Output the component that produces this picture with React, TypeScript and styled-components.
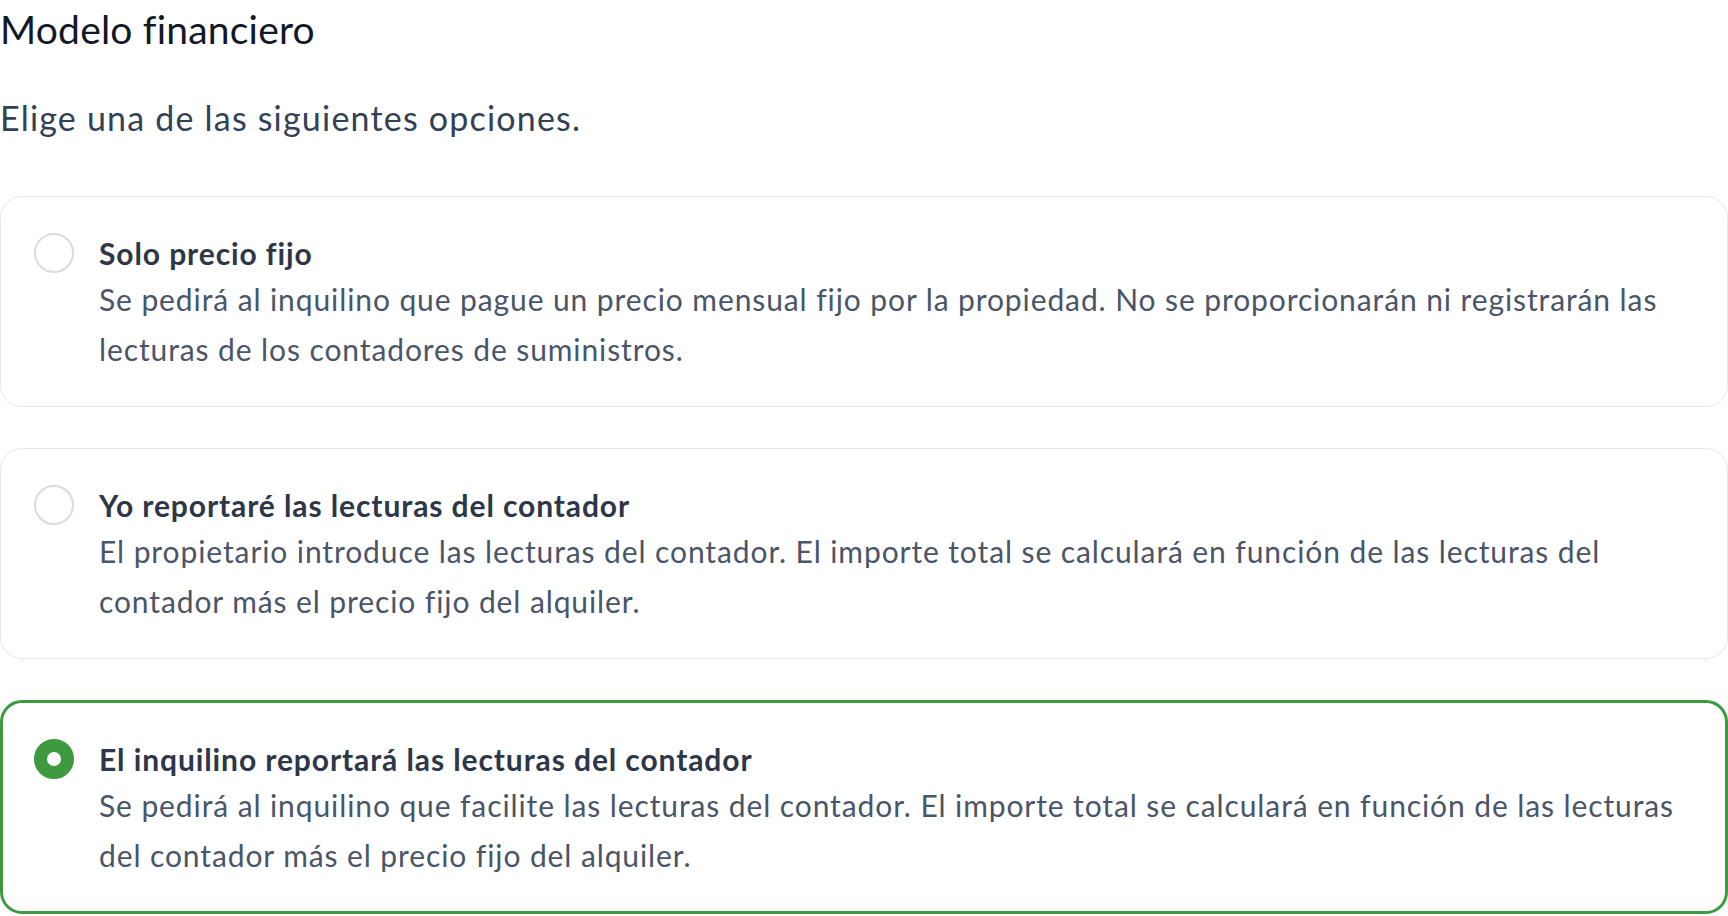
import React, { useState } from 'react'
import styled, { createGlobalStyle } from 'styled-components'

const GlobalStyle = createGlobalStyle`
  html, body {
    margin: 0;
    padding: 0;
    background: #ffffff;
  }
  body {
    font-family: Lato, "Liberation Sans", sans-serif;
    font-variant-ligatures: none;
  }
  * {
    box-sizing: border-box;
  }
`

const Page = styled.main`
  width: 1728px;
  display: flex;
  flex-direction: column;
`

const Heading = styled.h1`
  margin: 0;
  font-size: 39px;
  line-height: 58px;
  font-weight: 400;
  letter-spacing: 0.2px;
  color: #111827;
`

const Subtitle = styled.p`
  margin: 38px 0 56px;
  font-size: 34px;
  line-height: 44px;
  letter-spacing: 1.2px;
  color: #334155;
`

const OptionList = styled.div`
  display: flex;
  flex-direction: column;
  gap: 41px;
`

const Card = styled.label<{ $active: boolean }>`
  display: flex;
  align-items: flex-start;
  gap: 25px;
  padding: ${p => (p.$active ? '35px 31px 31px' : '35px 33px 32px')};
  border: ${p => (p.$active ? '3px solid #3e9a3f' : '1px solid #e6e7eb')};
  border-radius: 22px;
  background: #fff;
  cursor: pointer;
`

const Radio = styled.span<{ $active: boolean }>`
  flex: none;
  width: 40px;
  height: 40px;
  margin-top: 1px;
  border-radius: 50%;
  border: ${p => (p.$active ? '13px solid #3e9a3f' : '2px solid #d8dbe0')};
  background: #fff;
`

const Texts = styled.div`
  display: flex;
  flex-direction: column;
`

const Title = styled.div`
  font-size: 30px;
  line-height: 42px;
  font-weight: 700;
  letter-spacing: 0.9px;
  color: #2d3748;
`

const Description = styled.div`
  font-size: 30px;
  line-height: 50px;
  letter-spacing: 0.9px;
  color: #4a5568;
`

type Option = { id: string; title: string; text: string }

const options: Option[] = [
  {
    id: 'fixed',
    title: 'Solo precio fijo',
    text: 'Se pedirá al inquilino que pague un precio mensual fijo por la propiedad. No se proporcionarán ni registrarán las lecturas de los contadores de suministros.',
  },
  {
    id: 'owner',
    title: 'Yo reportaré las lecturas del contador',
    text: 'El propietario introduce las lecturas del contador. El importe total se calculará en función de las lecturas del contador más el precio fijo del alquiler.',
  },
  {
    id: 'tenant',
    title: 'El inquilino reportará las lecturas del contador',
    text: 'Se pedirá al inquilino que facilite las lecturas del contador. El importe total se calculará en función de las lecturas del contador más el precio fijo del alquiler.',
  },
]

const App = () => {
  const [selected, setSelected] = useState<string>('tenant')

  return (
    <Page>
      <GlobalStyle />
      <Heading>Modelo financiero</Heading>
      <Subtitle>Elige una de las siguientes opciones.</Subtitle>
      <OptionList>
        {options.map(o => (
          <Card key={o.id} $active={selected === o.id} onClick={() => setSelected(o.id)}>
            <Radio $active={selected === o.id} />
            <Texts>
              <Title>{o.title}</Title>
              <Description>{o.text}</Description>
            </Texts>
          </Card>
        ))}
      </OptionList>
    </Page>
  )
}

export default App
